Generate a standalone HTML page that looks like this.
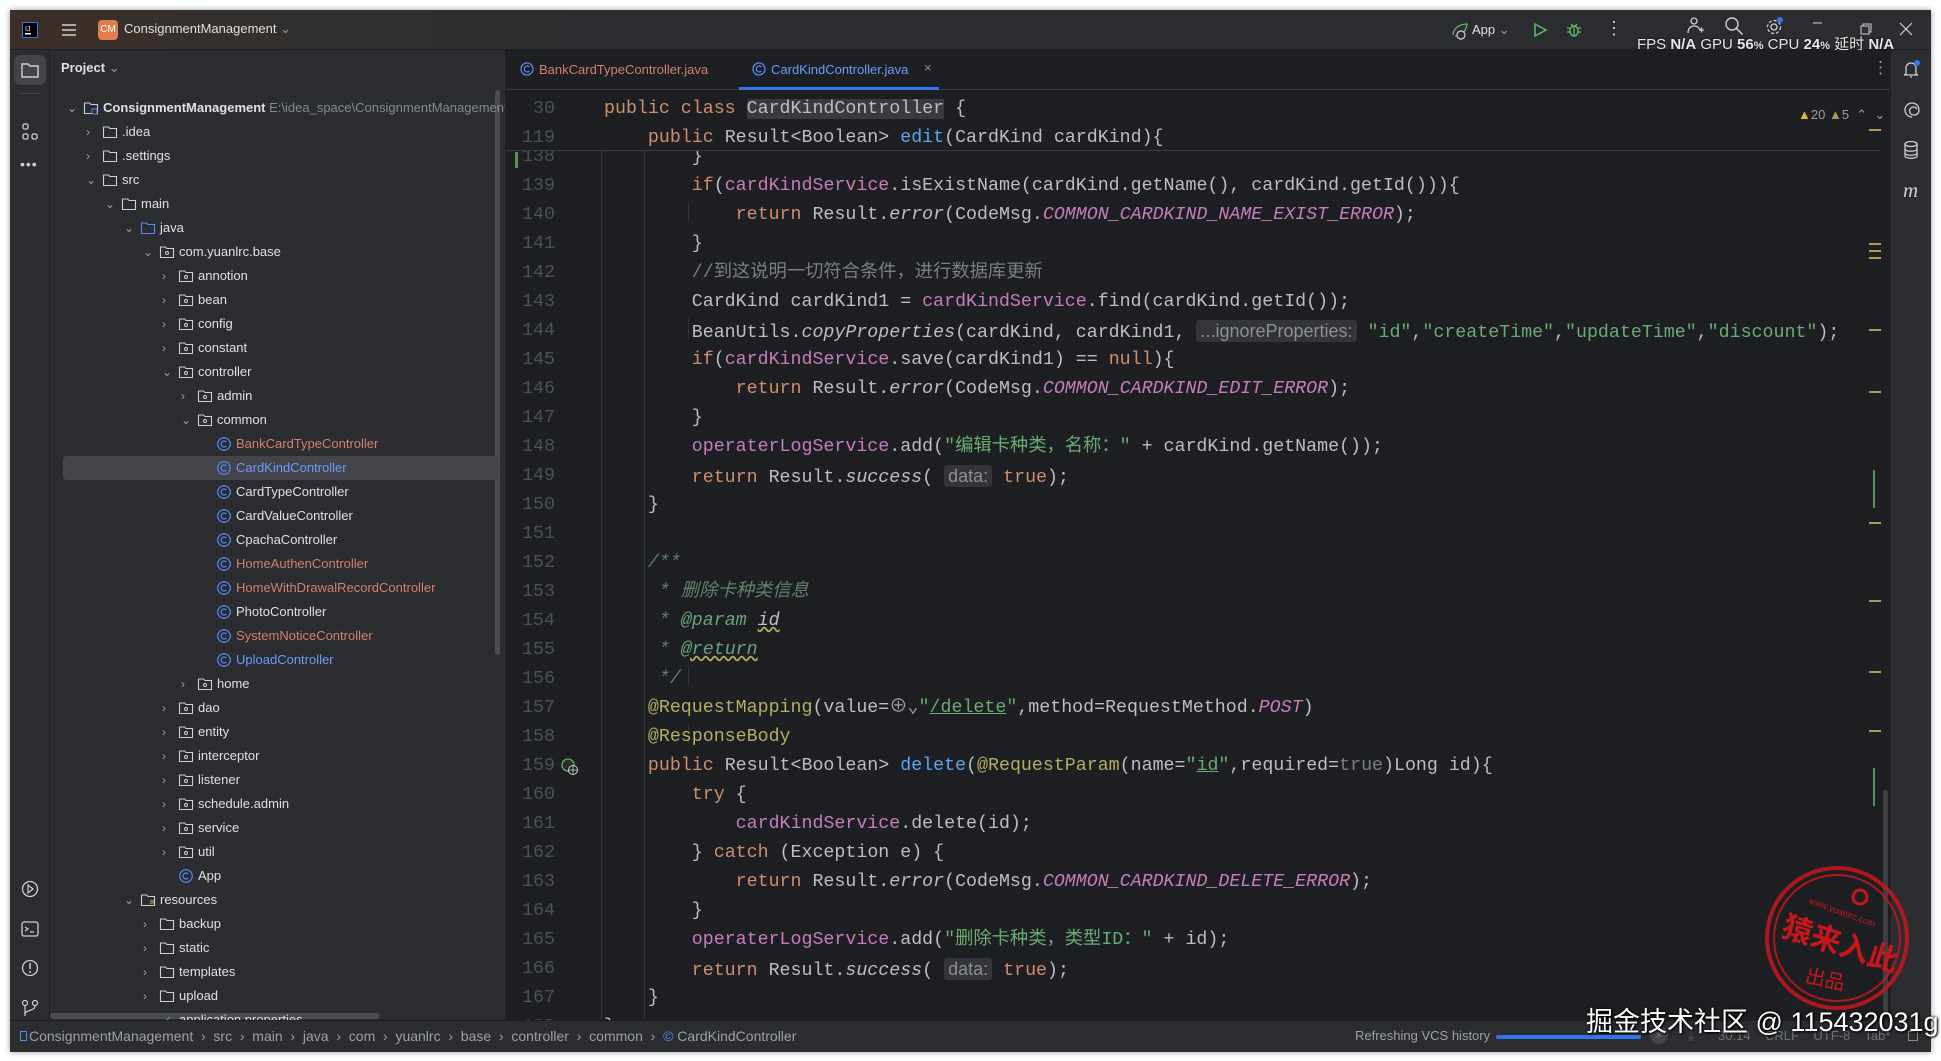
<!DOCTYPE html>
<html><head><meta charset="utf-8">
<style>
*{margin:0;padding:0;box-sizing:border-box}
html,body{width:1941px;height:1061px;overflow:hidden;background:#fff}
body{position:relative;font-family:"Liberation Sans","Noto Sans CJK SC",sans-serif;color:#dfe1e5}
#win{position:absolute;left:10px;top:10px;width:1921px;height:1042px;background:#2b2d30;overflow:hidden;box-shadow:0 0 6px rgba(0,0,0,.4)}
.a{position:absolute}
#title{left:0;top:0;width:1921px;height:40px;background:linear-gradient(90deg,#3d2f28 0px,#33302e 250px,#2b2d30 600px);border-bottom:1px solid #1e1f22}
#lstrip{left:0;top:40px;width:40px;height:970px;background:#2b2d30;border-right:1px solid #1e1f22}
#proj{left:40px;top:40px;width:455px;height:970px;background:#2b2d30;overflow:hidden}
#ed{left:495px;top:40px;width:1385px;height:970px;background:#1e1f22;border-left:1px solid #1e1f22;overflow:hidden}
#rstrip{left:1880px;top:40px;width:41px;height:970px;background:#2b2d30;border-left:1px solid #1e1f22}
#status{left:0;top:1010px;width:1921px;height:32px;background:#2b2d30;border-top:1px solid #1e1f22;font-size:14px;color:#9da0a8}
.row{position:absolute;height:24px;line-height:24px;font-size:13px;white-space:nowrap;left:0;width:455px}
.row span.t{position:absolute}
.row svg{position:absolute;top:4px}
.code{position:absolute;left:0;width:1385px;height:29px;line-height:29px;font-family:"Liberation Mono","Noto Sans CJK SC",monospace;font-size:18.3px;color:#bcbec4;white-space:pre}
.ln{position:absolute;width:49px;text-align:right;left:0;color:#4b5059}
.tx{position:absolute;left:98px}
.k{color:#cf8e6d}.f{color:#c77dbb}.m{color:#56a8f5}.s{color:#6aab73}.c{color:#c77dbb;font-style:italic}.i{font-style:italic}
.cm{color:#7a7e85}.dc{color:#5f826b;font-style:italic}.dt{color:#67a37c;font-style:italic}.an{color:#b3ae60}.g{color:#7a7e85}
.h{font-family:"Liberation Sans",sans-serif;font-size:18px;color:#8c8f94;background:#33353a;padding:1px 4px;border-radius:3px}
.ul{text-decoration:underline wavy #b3ae60}
.guide{position:absolute;width:1px;background:#313438}
.mk{position:absolute;left:1363px;width:12px;height:2px;background:#b09a56}
</style></head><body>
<div id="win">
 <div id="title" class="a">
  <svg class="a" style="left:12px;top:12px" width="16" height="16"><rect x=".5" y=".5" width="15" height="15" fill="#000" stroke="#3574f0"/><text x="3" y="9" font-size="7" fill="#fff" font-family="Liberation Sans">IJ</text><rect x="3" y="11" width="6" height="1.5" fill="#fff"/></svg>
  <svg class="a" style="left:51px;top:13px" width="16" height="14"><path d="M1 2h14M1 7h14M1 12h14" stroke="#ced0d6" stroke-width="1.5"/></svg>
  <div class="a" style="left:88px;top:10px;width:20px;height:20px;background:#e37d4f;border-radius:4px;color:#fff;font-size:10px;line-height:20px;text-align:center;">CM</div>
  <div class="a" style="left:114px;top:11px;font-size:13px;color:#dfe1e5">ConsignmentManagement <span style="color:#999">⌄</span></div>
  <svg class="a" style="left:1440px;top:11px" width="20" height="20"><path d="M3 14c0-6 6-11 14-11-1 7-5 12-12 12" fill="none" stroke="#5fb865" stroke-width="1.3"/><circle cx="11" cy="14" r="4" fill="#2b2d30" stroke="#ced0d6" stroke-width="1.2"/></svg>
  <div class="a" style="left:1462px;top:12px;font-size:13px">App <span style="color:#999">⌄</span></div>
  <svg class="a" style="left:1522px;top:12px" width="16" height="16"><path d="M3 2l11 6-11 6z" fill="none" stroke="#5fb865" stroke-width="1.5"/></svg>
  <svg class="a" style="left:1556px;top:12px" width="16" height="16"><ellipse cx="8" cy="9" rx="4" ry="5" fill="none" stroke="#5fb865" stroke-width="1.4"/><path d="M1 6h3M12 6h3M1 10h3M12 10h3M5 2l2 2M11 2l-2 2M8 5v9" stroke="#5fb865" stroke-width="1.3"/></svg>
  <div class="a" style="left:1595px;top:8px;font-size:18px;color:#ced0d6">⋮</div>
  <svg class="a" style="left:1675px;top:6px" width="20" height="20"><circle cx="9" cy="5" r="3" fill="none" stroke="#ced0d6" stroke-width="1.3"/><path d="M3 17c0-5 3-7 6-7s5 1 6 4M14 14h5M16.5 11.5v5" fill="none" stroke="#ced0d6" stroke-width="1.3"/></svg>
  <svg class="a" style="left:1714px;top:6px" width="20" height="20"><circle cx="8" cy="8" r="6" fill="none" stroke="#ced0d6" stroke-width="1.4"/><path d="M12.5 12.5l6 6" stroke="#ced0d6" stroke-width="1.5"/></svg>
  <svg class="a" style="left:1755px;top:6px" width="20" height="20"><circle cx="9" cy="11" r="3" fill="none" stroke="#ced0d6" stroke-width="1.3"/><circle cx="9" cy="11" r="6.5" fill="none" stroke="#ced0d6" stroke-width="1.3" stroke-dasharray="3 2"/><circle cx="15" cy="4" r="3" fill="#3574f0"/></svg>
  <div class="a" style="left:1803px;top:4px;font-size:16px;color:#ced0d6">–</div>
  <svg class="a" style="left:1850px;top:13px" width="12" height="12"><rect x="1" y="3" width="8" height="8" fill="none" stroke="#ced0d6"/><path d="M3 3V1h8v8H9" fill="none" stroke="#ced0d6"/></svg>
  <svg class="a" style="left:1889px;top:12px" width="14" height="14"><path d="M1 1l12 12M13 1L1 13" stroke="#ced0d6" stroke-width="1.2"/></svg>
  <div class="a" style="left:1627px;top:23px;font-size:15px;color:#e8e8e8;white-space:nowrap;text-shadow:0 0 2px #000">FPS <b>N/A</b> GPU <b>56</b><b style="font-size:11px">%</b> CPU <b>24</b><b style="font-size:11px">%</b> 延时 <b>N/A</b></div>
 </div>

 <div id="lstrip" class="a">
  <div class="a" style="left:4px;top:5px;width:32px;height:30px;background:#43454a;border-radius:6px"></div>
  <svg class="a" style="left:11px;top:12px" width="18" height="16"><path d="M1 2h6l2 2h8v11H1z" fill="none" stroke="#ced0d6" stroke-width="1.4"/></svg>
  <div class="a" style="left:9px;top:43px;width:22px;height:1px;background:#43454a"></div>
  <svg class="a" style="left:12px;top:73px" width="16" height="18"><rect x="1" y="1" width="5" height="5" rx="1.5" fill="none" stroke="#ced0d6" stroke-width="1.3"/><rect x="1" y="11" width="5" height="5" rx="1.5" fill="none" stroke="#ced0d6" stroke-width="1.3"/><rect x="10" y="11" width="5" height="5" rx="1.5" fill="none" stroke="#ced0d6" stroke-width="1.3"/></svg>
  <div class="a" style="left:10px;top:106px;font-size:14px;color:#ced0d6;letter-spacing:1px">•••</div>
  <svg class="a" style="left:11px;top:830px" width="18" height="18"><circle cx="9" cy="9" r="7.5" fill="none" stroke="#ced0d6" stroke-width="1.3"/><path d="M7 5l5 4-5 4z" fill="none" stroke="#ced0d6" stroke-width="1.2"/></svg>
  <svg class="a" style="left:11px;top:870px" width="18" height="18"><rect x="1" y="2" width="16" height="14" rx="2" fill="none" stroke="#ced0d6" stroke-width="1.3"/><path d="M4 7l3 2-3 2M9 12h4" fill="none" stroke="#ced0d6" stroke-width="1.2"/></svg>
  <svg class="a" style="left:11px;top:909px" width="18" height="18"><circle cx="9" cy="9" r="7.5" fill="none" stroke="#ced0d6" stroke-width="1.3"/><path d="M9 4v6M9 12v2" stroke="#ced0d6" stroke-width="1.5"/></svg>
  <svg class="a" style="left:11px;top:949px" width="18" height="18"><circle cx="4" cy="4" r="2.5" fill="none" stroke="#ced0d6" stroke-width="1.2"/><circle cx="14" cy="4" r="2.5" fill="none" stroke="#ced0d6" stroke-width="1.2"/><path d="M4 7v10M14 7c0 5-10 4-10 8" fill="none" stroke="#ced0d6" stroke-width="1.2"/></svg>
 </div>

 <div id="proj" class="a">
  <div class="a" style="left:11px;top:10px;font-size:13px;font-weight:bold;color:#dfe1e5">Project <span style="font-weight:normal;color:#999">⌄</span></div>
  <div class="a" style="left:445px;top:40px;width:5px;height:565px;background:#4a4c50;border-radius:3px"></div>
  <div class="a" style="left:0;top:963px;width:330px;height:6px;background:#4a4c50;border-radius:3px"></div>
  <div id="tree"></div>
 </div>

 <div id="ed" class="a">
  <div class="a" style="left:0;top:0;width:1385px;height:40px;background:#1e1f22;border-bottom:1px solid #393b40"></div>
  <svg class="a" style="left:14px;top:12px" width="14" height="14"><circle cx="7" cy="7" r="6" fill="none" stroke="#548af7" stroke-width="1.3"/><path d="M9.5 5a3 3 0 1 0 0 4" fill="none" stroke="#548af7" stroke-width="1.2"/></svg>
  <div class="a" style="left:33px;top:12px;font-size:13px;color:#d2826e">BankCardTypeController.java</div>
  <svg class="a" style="left:246px;top:12px" width="14" height="14"><circle cx="7" cy="7" r="6" fill="none" stroke="#548af7" stroke-width="1.3"/><path d="M9.5 5a3 3 0 1 0 0 4" fill="none" stroke="#548af7" stroke-width="1.2"/></svg>
  <div class="a" style="left:265px;top:12px;font-size:13px;color:#6c9cf9">CardKindController.java</div>
  <div class="a" style="left:418px;top:10px;font-size:13px;color:#8c8f94">×</div>
  <div class="a" style="left:233px;top:37px;width:200px;height:3px;background:#3574f0"></div>
  <div class="a" style="left:1366px;top:8px;font-size:17px;color:#9da0a8">⋮</div>
  <div id="codewrap" class="a" style="left:0;top:0;width:1385px;height:970px"></div>
  <div class="a" style="left:1292px;top:57px;font-size:13px;color:#9da0a8;white-space:nowrap"><span style="color:#e0b341">▲</span>20 <span style="color:#b09a56">▲</span>5 &nbsp;<span>⌃</span> &nbsp;⌄</div>
 </div>

 <div id="rstrip" class="a">
  <svg class="a" style="left:11px;top:9px" width="20" height="20"><path d="M4 15V9a5 5 0 0 1 10 0v6l2 1H2zM8 18h2" fill="none" stroke="#ced0d6" stroke-width="1.3"/><circle cx="15" cy="4" r="3" fill="#3574f0"/></svg>
  <svg class="a" style="left:11px;top:50px" width="20" height="20"><path d="M10 17a7 7 0 1 1 7-7c0 3-2 5-5 5a4 4 0 1 1 3-6" fill="none" stroke="#ced0d6" stroke-width="1.3"/></svg>
  <svg class="a" style="left:12px;top:90px" width="16" height="20"><ellipse cx="8" cy="4" rx="6" ry="2.5" fill="none" stroke="#ced0d6" stroke-width="1.3"/><path d="M2 4v12c0 3 12 3 12 0V4M2 9c0 3 12 3 12 0M2 13c0 3 12 3 12 0" fill="none" stroke="#ced0d6" stroke-width="1.3"/></svg>
  <div class="a" style="left:12px;top:128px;font-size:21px;font-style:italic;color:#ced0d6;font-family:'Liberation Serif',serif">m</div>
 </div>

 <div id="status" class="a">
  <div class="a" style="left:10px;top:10px;width:7px;height:10px;border:1px solid #548af7"></div>
  <div class="a" style="left:19px;top:7px;white-space:nowrap">ConsignmentManagement &nbsp;›&nbsp; src &nbsp;›&nbsp; main &nbsp;›&nbsp; java &nbsp;›&nbsp; com &nbsp;›&nbsp; yuanlrc &nbsp;›&nbsp; base &nbsp;›&nbsp; controller &nbsp;›&nbsp; common &nbsp;›&nbsp; <span style="color:#548af7">©</span> CardKindController</div>
  <div class="a" style="left:1345px;top:7px;white-space:nowrap;font-size:13px">Refreshing VCS history</div>
  <div class="a" style="left:1486px;top:14px;width:145px;height:4px;background:#3574f0;border-radius:2px"></div>
  <div class="a" style="left:1640px;top:5px;width:18px;height:18px;border-radius:9px;background:#43454a;color:#777;text-align:center;line-height:18px;font-size:12px">×</div>
  <div class="a" style="left:1678px;top:6px;color:#555">⤓</div>
  <div class="a" style="left:1708px;top:7px;white-space:nowrap;color:#6f737a;font-size:13px">30:14 &nbsp;&nbsp; CRLF &nbsp;&nbsp; UTF-8 &nbsp;&nbsp; Tab*</div>
  <div class="a" style="left:1898px;top:10px;width:10px;height:10px;border:1px solid #888"></div>
 </div>
</div>

<svg class="a" style="left:1762px;top:863px" width="150" height="150">
 <g fill="none" stroke="#c8171c" opacity=".85"><circle cx="75" cy="75" r="70" stroke-width="4"/><circle cx="75" cy="75" r="63" stroke-width="2"/></g>
 <text x="36" y="52" font-size="9" fill="#c8171c" transform="rotate(20 75 75)" font-family="Liberation Sans">www.yuanlrc.com</text>
 <text x="20" y="90" font-size="30" fill="#c8171c" font-weight="bold" transform="rotate(18 75 75)" font-family="Noto Sans CJK SC,sans-serif">猿来入此</text>
 <text x="52" y="125" font-size="20" fill="#c8171c" transform="rotate(12 75 75)" font-family="Noto Sans CJK SC,sans-serif">出品</text>
 <circle cx="98" cy="34" r="7" fill="none" stroke="#c8171c" stroke-width="3"/>
</svg>
<div class="a" style="left:1586px;top:1000px;font-size:27px;color:#fff;white-space:nowrap;text-shadow:0 0 3px #000,1px 1px 2px #000;font-family:'Liberation Sans','Noto Sans CJK SC',sans-serif">掘金技术社区 @ 115432031g</div>

<script>
(function(){
var rows=[
[0,'ConsignmentManagement','mod',1],[1,'.idea','d',0],[1,'.settings','d',0],[1,'src','d',1],[2,'main','d',1],[3,'java','bd',1],[4,'com.yuanlrc.base','p',1],
[5,'annotion','p',0],[5,'bean','p',0],[5,'config','p',0],[5,'constant','p',0],[5,'controller','p',1],[6,'admin','p',0],[6,'common','p',1],
[7,'BankCardTypeController','co'],[7,'CardKindController','cb'],[7,'CardTypeController','cw'],[7,'CardValueController','cw'],[7,'CpachaController','cw'],[7,'HomeAuthenController','co'],[7,'HomeWithDrawalRecordController','co'],[7,'PhotoController','cw'],[7,'SystemNoticeController','co'],[7,'UploadController','cb'],
[6,'home','p',0],[5,'dao','p',0],[5,'entity','p',0],[5,'interceptor','p',0],[5,'listener','p',0],[5,'schedule.admin','p',0],[5,'service','p',0],[5,'util','p',0],[5,'App','app'],
[3,'resources','r',1],[4,'backup','d',0],[4,'static','d',0],[4,'templates','d',0],[4,'upload','d',0],[4,'application.properties','f']];
var h='';
rows.forEach(function(r,i){
 var top=46+24*i, tx=53+19*r[0], t=r[2], col='#dfe1e5';
 if(i==15) h+='<div class="a" style="left:13px;top:'+top+'px;width:436px;height:24px;background:#43454a;border-radius:4px"></div>';
 h+='<div class="row" style="top:'+top+'px">';
 if(r[3]!==undefined) h+='<span class="t" style="left:'+(tx-36)+'px;color:#9da0a8;font-size:12px">'+(r[3]?'⌄':'›')+'</span>';
 var ix=tx-20, s='';
 if(t=='d'||t=='bd'||t=='p'||t=='r'||t=='mod'){
  var c=t=='bd'?'#548af7':'#ced0d6';
  s='<svg style="left:'+ix+'px" width="16" height="16"><path d="M1.5 3h5l1.5 1.5h6.5v9h-13z" fill="none" stroke="'+c+'" stroke-width="1.1"/>'+(t=='p'?'<circle cx="8" cy="9" r="1.5" fill="none" stroke="#ced0d6"/>':'')+(t=='mod'?'<rect x="9" y="9" width="5" height="5" fill="#2b2d30" stroke="#548af7"/>':'')+(t=='r'?'<path d="M10 9h4M10 11h4" stroke="#e0b341"/>':'')+'</svg>';
 } else if(t[0]=='c'||t=='app'){
  col=t=='co'?'#d2826e':t=='cb'?'#6c9cf9':'#dfe1e5';
  s='<svg style="left:'+ix+'px" width="16" height="16"><circle cx="8" cy="8" r="6.3" fill="none" stroke="#548af7" stroke-width="1.2"/><path d="M10.3 6a3 3 0 1 0 0 4" fill="none" stroke="#548af7" stroke-width="1.2"/></svg>';
 } else s='<svg style="left:'+ix+'px" width="16" height="16"><path d="M3 13l8-8" stroke="#6aab73"/></svg>';
 h+=s+'<span class="t" style="left:'+tx+'px;color:'+col+(t=='mod'?';font-weight:bold':'')+'">'+r[1]+(t=='mod'?' <span style="font-weight:normal;color:#868a91">E:\\idea_space\\ConsignmentManagement</span>':'')+'</span></div>';
});
document.getElementById('tree').innerHTML=h;

var I='    ';
var L={
139:I+I+'<span class="k">if</span>(<span class="f">cardKindService</span>.isExistName(cardKind.getName(), cardKind.getId())){',
140:I+I+I+'<span class="k">return</span> Result.<span class="i">error</span>(CodeMsg.<span class="c">COMMON_CARDKIND_NAME_EXIST_ERROR</span>);',
141:I+I+'}',
142:I+I+'<span class="cm">//到这说明一切符合条件，进行数据库更新</span>',
143:I+I+'CardKind cardKind1 = <span class="f">cardKindService</span>.find(cardKind.getId());',
144:I+I+'BeanUtils.<span class="i">copyProperties</span>(cardKind, cardKind1, <span class="h">...ignoreProperties:</span> <span class="s">"id"</span>,<span class="s">"createTime"</span>,<span class="s">"updateTime"</span>,<span class="s">"discount"</span>);',
145:I+I+'<span class="k">if</span>(<span class="f">cardKindService</span>.save(cardKind1) == <span class="k">null</span>){',
146:I+I+I+'<span class="k">return</span> Result.<span class="i">error</span>(CodeMsg.<span class="c">COMMON_CARDKIND_EDIT_ERROR</span>);',
147:I+I+'}',
148:I+I+'<span class="f">operaterLogService</span>.add(<span class="s">"编辑卡种类，名称："</span> + cardKind.getName());',
149:I+I+'<span class="k">return</span> Result.<span class="i">success</span>( <span class="h">data:</span> <span class="k">true</span>);',
150:I+'}',
151:'',
152:I+'<span class="dc">/**</span>',
153:I+'<span class="dc"> * 删除卡种类信息</span>',
154:I+'<span class="dc"> * </span><span class="dt">@param</span><span class="dc"> </span><span class="dc ul" style="color:#bcbec4">id</span>',
155:I+'<span class="dc"> * </span><span class="dt ul">@return</span>',
156:I+'<span class="dc"> */</span>',
157:I+'<span class="an">@RequestMapping</span>(value=<span style="color:#9da0a8">⊕⌄</span><span class="s">"<u>/delete</u>"</span>,method=RequestMethod.<span class="c">POST</span>)',
158:I+'<span class="an">@ResponseBody</span>',
159:I+'<span class="k">public</span> Result&lt;Boolean&gt; <span class="m">delete</span>(<span class="an">@RequestParam</span>(name=<span class="s">"<u>id</u>"</span>,required=<span class="g">true</span>)Long id){',
160:I+I+'<span class="k">try</span> {',
161:I+I+I+'<span class="f">cardKindService</span>.delete(id);',
162:I+I+'} <span class="k">catch</span> (Exception e) {',
163:I+I+I+'<span class="k">return</span> Result.<span class="i">error</span>(CodeMsg.<span class="c">COMMON_CARDKIND_DELETE_ERROR</span>);',
164:I+I+'}',
165:I+I+'<span class="f">operaterLogService</span>.add(<span class="s">"删除卡种类，类型ID："</span> + id);',
166:I+I+'<span class="k">return</span> Result.<span class="i">success</span>( <span class="h">data:</span> <span class="k">true</span>);',
167:I+'}',
168:'}'};
var c='<div class="guide" style="left:95px;top:101px;height:870px"></div><div class="guide" style="left:138px;top:101px;height:870px"></div>';
c+='<div class="guide" style="left:182px;top:152px;height:20px"></div><div class="guide" style="left:182px;top:268px;height:20px"></div><div class="guide" style="left:182px;top:616px;height:20px"></div><div class="guide" style="left:182px;top:674px;height:20px"></div>';
c+='<div class="code" style="top:93px;height:29px;overflow:hidden"><span class="ln">138</span><span class="tx">'+I+I+'}</span></div>';
for(var n=139;n<=168;n++){var top=122+(n-139)*29;
 c+='<div class="code" style="top:'+top+'px"><span class="ln">'+n+'</span><span class="tx">'+L[n]+'</span></div>';}
c+='<div class="a" style="left:0;top:40px;width:1375px;height:61px;background:#1e1f22;border-bottom:1px solid #393b40"></div>';
c+='<div class="code" style="top:45px"><span class="ln">30</span><span class="tx"><span class="k">public class</span> <span style="background:#393b40">CardKindController</span> {</span></div>';
c+='<div class="code" style="top:74px"><span class="ln">119</span><span class="tx">'+I+'<span class="k">public</span> Result&lt;Boolean&gt; <span class="m">edit</span>(CardKind cardKind){</span></div>';
c+='<div class="a" style="left:9px;top:102px;width:3px;height:16px;background:#549159"></div>';
c+='<svg class="a" style="left:55px;top:708px" width="18" height="18"><circle cx="7" cy="7" r="6" fill="#2b2d30" stroke="#5fb865" stroke-width="1.3"/><circle cx="12" cy="12" r="4.5" fill="#1e1f22" stroke="#ced0d6"/><path d="M7.5 12h9M12 7.5v9" stroke="#ced0d6" stroke-width=".8"/></svg>';
[79,193,200,207,279,341,472,550,621,680].forEach(function(y){c+='<div class="mk" style="top:'+y+'px"></div>';});
c+='<div class="a" style="left:1367px;top:420px;width:2px;height:38px;background:#549159"></div><div class="a" style="left:1367px;top:718px;width:2px;height:38px;background:#549159"></div>';
c+='<div class="a" style="left:1377px;top:740px;width:5px;height:225px;background:#3d3f43;border-radius:3px"></div>';
document.getElementById('codewrap').innerHTML=c;
})();
</script>
</body></html>
